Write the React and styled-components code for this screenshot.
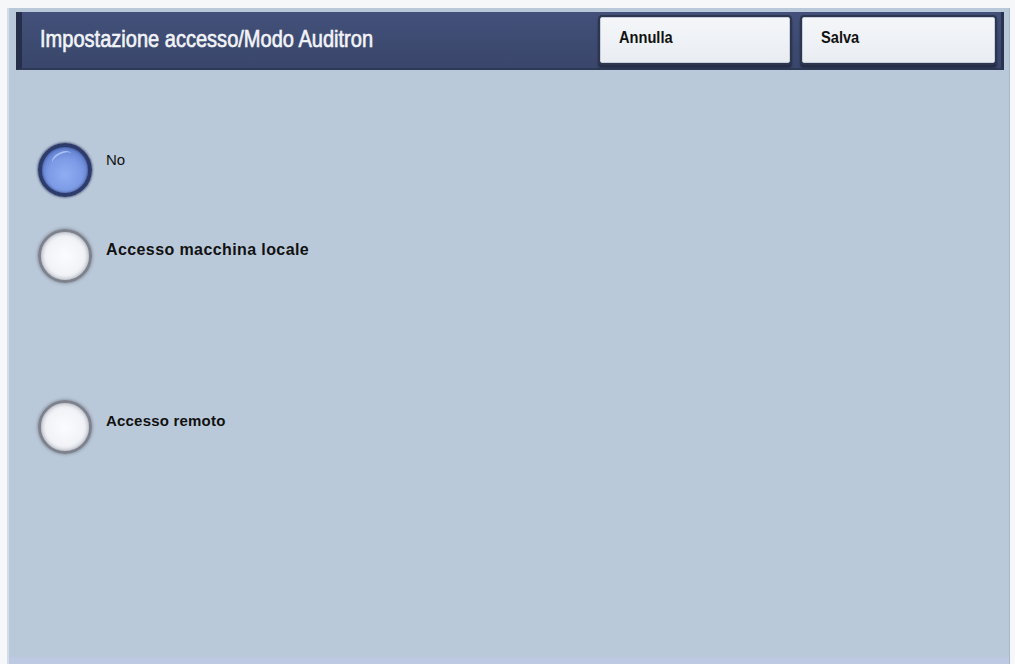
import styled, { createGlobalStyle } from 'styled-components';

const Global = createGlobalStyle`
  html, body {
    margin: 0;
    padding: 0;
    background: #f6f7f9;
  }
  body {
    font-family: "Liberation Sans", Arial, sans-serif;
  }
`;

const Page = styled.div`
  width: 1015px;
  height: 664px;
  padding: 8px 5px 0 7px;
  box-sizing: border-box;
  overflow: hidden;
`;

const Panel = styled.div`
  height: 100%;
  display: flex;
  flex-direction: column;
  background: #bac9d9;
  border-left: 2px solid #d3dde8;
  border-right: 1px solid #a9b7c8;
  padding: 4px 5px 0 7px;
  box-sizing: border-box;
  box-shadow: inset 0 -7px 0 #bdc9e2;
`;

const Header = styled.div`
  height: 58px;
  display: flex;
  align-items: center;
  background: linear-gradient(#43507a, #3d4a70 60%, #3a466b);
  border-left: 6px solid #252f4a;
  border-right: 3px solid #2a3450;
  border-bottom: 2px solid #2e3955;
  box-sizing: border-box;
  padding: 0 6px 0 18px;
`;

/* the device font is a narrow sans; Liberation Sans squeezed sideways stands in for it */
const Narrow = styled.span`
  display: inline-block;
  white-space: nowrap;
  transform: scaleX(${p => p.scale});
  transform-origin: left center;
`;

const Title = styled.h1`
  flex: 1;
  margin: 0 0 2px 0;
  color: #f2f4f8;
  font-family: "Liberation Sans", Arial, sans-serif;
  font-weight: normal;
  font-size: 24px;
  -webkit-text-stroke: 0.65px #f2f4f8;
`;

const Button = styled.button`
  width: ${p => p.w}px;
  height: 46px;
  margin-left: ${p => p.gap}px;
  background: linear-gradient(#f4f6f9, #e9edf2);
  border: 1px solid #c8cfd9;
  border-radius: 2px;
  box-shadow: 0 0 0 2px #2c3650, 0 3px 2px 2px #252e45;
  text-align: left;
  padding: 0 0 4px 18px;
  color: #111;
  font-family: "Liberation Sans", Arial, sans-serif;
  font-weight: bold;
  font-size: 17px;
  cursor: pointer;
`;

const Options = styled.div`
  display: flex;
  flex-direction: column;
  padding-left: 22px;
`;

const Option = styled.label`
  display: flex;
  align-items: flex-start;
  margin-top: ${p => p.top}px;
  cursor: pointer;
`;

const Radio = styled.span`
  width: 54px;
  height: 54px;
  flex: none;
  border-radius: 50%;
  box-sizing: border-box;
  position: relative;
  border: ${p => (p.on ? '4px solid #2e3c6b' : '3px solid #7d828d')};
  background: ${p =>
    p.on
      ? 'radial-gradient(circle at 50% 60%, #8fadf3 0%, #7d9be6 45%, #607fcf 75%, #4660a6 100%)'
      : 'radial-gradient(circle at 50% 50%, #fbfcfe 0%, #f1f3f7 55%, #dfe2e9 85%, #c4c8d1 100%)'};
  box-shadow: ${p =>
    p.on
      ? '0 0 2px 1px rgba(38, 50, 92, 0.55), inset 0 0 3px rgba(20, 30, 70, 0.6)'
      : '0 0 3px 1px rgba(95, 100, 115, 0.45), inset 0 0 4px rgba(90, 95, 110, 0.55)'};
  &::after {
    content: '';
    display: ${p => (p.on ? 'block' : 'none')};
    position: absolute;
    left: 9px;
    top: 5px;
    width: 22px;
    height: 12px;
    border-radius: 50%;
    border-top: 2px solid rgba(205, 220, 255, 0.65);
    transform: rotate(-28deg);
  }
`;

const Label = styled.span`
  margin-left: 14px;
  margin-top: ${p => p.dy}px;
  color: #111;
  font-size: ${p => p.size}px;
  font-weight: ${p => (p.bold ? 'bold' : 'normal')};
  letter-spacing: ${p => p.spacing}px;
`;

const options = [
  { id: 'no', text: 'No', top: 73, on: true, bold: false, size: 15, spacing: 0 },
  { id: 'local', text: 'Accesso macchina locale', top: 32, on: false, bold: true, size: 16, spacing: 0.4 },
  { id: 'remote', text: 'Accesso remoto', top: 117, on: false, bold: true, size: 15, spacing: 0.2 },
];

export default function App() {
  return (
    <Page>
      <Global />
      <Panel>
        <Header>
          <Title>
            <Narrow scale={0.835}>Impostazione accesso/Modo Auditron</Narrow>
          </Title>
          <Button w={190} gap={0}>
            <Narrow scale={0.86}>Annulla</Narrow>
          </Button>
          <Button w={193} gap={12}>
            <Narrow scale={0.86}>Salva</Narrow>
          </Button>
        </Header>
        <Options>
          {options.map(o => (
            <Option key={o.id} top={o.top}>
              <Radio on={o.on} />
              <Label bold={o.bold} size={o.size} spacing={o.spacing} dy={o.on ? 8 : 12}>
                {o.text}
              </Label>
            </Option>
          ))}
        </Options>
      </Panel>
    </Page>
  );
}
